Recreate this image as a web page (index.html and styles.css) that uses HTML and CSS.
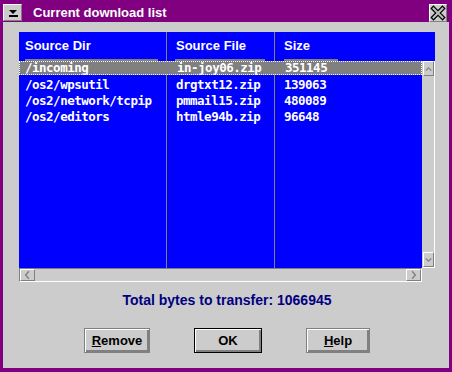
FILE: index.html
```html
<!DOCTYPE html>
<html lang="en">
<head>
  <meta charset="UTF-8" />
  <title>Current download list</title>
  <link rel="stylesheet" href="styles.css">
</head>
<body>

  <div class="window">
    <div class="titlebar">
      <div class="sysmenu">
        <svg width="17" height="15" viewBox="0 0 17 15"><polygon points="5,5 13,5 9,9" fill="#000"/><rect x="5" y="10" width="9" height="2" fill="#000"/></svg>
      </div>
      <div class="title">Current download list</div>
      <div class="close">
        <svg width="16" height="16" viewBox="0 0 16 16">
          <path d="M3.5 3.5 L12.5 12.5 M12.5 3.5 L3.5 12.5" stroke="#000" stroke-width="4.5" stroke-linecap="square"/>
          <path d="M3.5 3.5 L12.5 12.5 M12.5 3.5 L3.5 12.5" stroke="#c0c0c0" stroke-width="2" stroke-linecap="square"/>
        </svg>
      </div>
    </div>

    <div class="client">
      <div class="listbox">
        <div class="lb-head">
          <div class="hd c1"><div class="hd-text">Source Dir</div><div class="hd-line l1"></div></div>
          <div class="hd c2"><div class="hd-text">Source File</div><div class="hd-line l2"></div></div>
          <div class="hd c3"><div class="hd-text">Size</div><div class="hd-line l3"></div></div>
        </div>

        <div class="lb-mid">
          <div class="lb-body">
            <div class="row sel"><span class="c1">/incoming</span><span class="c2">in-joy06.zip</span><span class="c3">351145</span></div>
            <div class="row"><span class="c1">/os2/wpsutil</span><span class="c2">drgtxt12.zip</span><span class="c3">139063</span></div>
            <div class="row"><span class="c1">/os2/network/tcpip</span><span class="c2">pmmail15.zip</span><span class="c3">480089</span></div>
            <div class="row"><span class="c1">/os2/editors</span><span class="c2">htmle94b.zip</span><span class="c3">96648</span></div>
          </div>
          <div class="vscroll">
            <div class="arrow v"><svg width="11" height="12" viewBox="0 0 11 12"><polyline points="2,8 5.5,4.5 9,8" fill="none" stroke="#808080" stroke-width="1.5"/></svg></div>
            <div class="arrow v"><svg width="11" height="12" viewBox="0 0 11 12"><polyline points="2,4 5.5,7.5 9,4" fill="none" stroke="#808080" stroke-width="1.5"/></svg></div>
          </div>
        </div>

        <div class="hscroll">
          <div class="arrow h"><svg width="14" height="12" viewBox="0 0 14 12"><polyline points="8.5,2 5,6 8.5,10" fill="none" stroke="#808080" stroke-width="1.5"/></svg></div>
          <div class="arrow h"><svg width="14" height="12" viewBox="0 0 14 12"><polyline points="5.5,2 9,6 5.5,10" fill="none" stroke="#808080" stroke-width="1.5"/></svg></div>
        </div>
      </div>

      <div class="total">Total bytes to transfer: 1066945</div>

      <div class="buttons">
        <button class="btn b-remove"><u>R</u>emove</button>
        <button class="btn b-ok default">OK</button>
        <button class="btn b-help"><u>H</u>elp</button>
      </div>
    </div>
  </div>

</body>
</html>
```

FILE: styles.css
```css
:root {
  --purple: #800080;
  --face: #cccccc;
  --shadow: #808080;
  --blue: #0000ff;
  --navy: #000080;
}

body {
  margin: 0;
  font-family: 'Liberation Sans', Arial, sans-serif;
  font-weight: bold;
  font-size: 13px;
  line-height: 15px;
}

.window {
  width: 452px;
  height: 372px;
  box-sizing: border-box;
  background: var(--face);
  border-left: 3px solid var(--purple);
  border-right: 3px solid var(--purple);
  border-bottom: 4px solid var(--purple);
  display: flex;
  flex-direction: column;
}

/* title bar */
.titlebar {
  height: 22px;
  background: var(--purple);
  display: flex;
  align-items: flex-start;
}

.sysmenu, .close {
  box-sizing: border-box;
  background: var(--face);
  border-top: 1px solid #fff;
  border-left: 1px solid #fff;
  border-right: 1px solid var(--shadow);
  border-bottom: 1px solid var(--shadow);
  display: flex;
  align-items: center;
  justify-content: center;
}

.sysmenu {
  width: 19px;
  height: 17px;
  margin-top: 4px;
}

.close {
  width: 18px;
  height: 18px;
  margin-top: 4px;
  margin-left: auto;
  margin-right: 2px;
}

.title {
  color: #fff;
  margin: 5px 0 0 11px;
}

/* client area */
.client {
  flex: 1;
  display: flex;
  flex-direction: column;
  padding: 10px 14px 0 16px;
}

.listbox {
  width: 416px;
}

.lb-head {
  height: 29px;
  background:
    linear-gradient(var(--shadow), var(--shadow)) 147px 0 / 1px 100% no-repeat,
    linear-gradient(var(--shadow), var(--shadow)) 255px 0 / 1px 100% no-repeat,
    var(--blue);
  display: grid;
  grid-template-columns: 147px 108px 1fr;
  color: #fff;
}

.hd {
  padding-top: 6px;
}

.hd-text {
  height: 15px;
}

.hd.c1 .hd-text { padding-left: 6px; }
.hd.c2 .hd-text { padding-left: 10px; }
.hd.c3 .hd-text { padding-left: 10px; }

.hd-line {
  height: 2px;
  margin-top: 6px;
  background: var(--shadow);
}

.l1 { margin-left: 6px; width: 133px; }
.l2 { margin-left: 9px; width: 90px; }
.l3 { margin-left: 10px; width: 54px; }

.lb-mid {
  display: flex;
}

.lb-body {
  width: 403px;
  height: 207px;
  background:
    linear-gradient(var(--shadow), var(--shadow)) 147px 0 / 1px 100% no-repeat,
    linear-gradient(var(--shadow), var(--shadow)) 255px 0 / 1px 100% no-repeat,
    var(--blue);
  font-family: 'DejaVu Sans Mono', monospace;
  font-size: 12.5px;
  letter-spacing: -0.5px;
  color: #fff;
}

.row {
  display: grid;
  grid-template-columns: 147px 108px 1fr;
  height: 16px;
  line-height: 14px;
  box-sizing: border-box;
  padding-top: 1px;
}

.row .c1 { padding-left: 6px; }
.row .c2 { padding-left: 10px; }
.row .c3 { padding-left: 10px; }

.row.sel {
  height: 14px;
  padding-top: 0;
  margin-bottom: 2px;
  line-height: 12px;
  background: var(--shadow);
  border: 1px dotted #fff;
}

.row.sel .c1 { padding-left: 5px; }

.vscroll {
  width: 13px;
  height: 207px;
  box-sizing: border-box;
  border-right: 1px solid #fff;
  border-bottom: 1px solid #fff;
  display: flex;
  flex-direction: column;
  justify-content: space-between;
}

.arrow {
  box-sizing: border-box;
  background: var(--face);
  border-top: 1px solid #fff;
  border-left: 1px solid #fff;
  border-right: 1px solid var(--shadow);
  border-bottom: 1px solid var(--shadow);
  display: flex;
  align-items: center;
  justify-content: center;
}

.arrow.v {
  width: 11px;
  height: 15px;
  margin-left: 1px;
}

.hscroll {
  width: 403px;
  height: 14px;
  box-sizing: border-box;
  border-top: 1px solid var(--shadow);
  border-left: 1px solid var(--shadow);
  border-right: 1px solid #fff;
  border-bottom: 1px solid #fff;
  display: flex;
  justify-content: space-between;
}

.arrow.h {
  width: 15px;
  height: 12px;
}

.total {
  margin-top: 10px;
  font-size: 14px;
  line-height: 16px;
  text-align: center;
  color: var(--navy);
}

.buttons {
  margin-top: 20px;
  display: flex;
  justify-content: center;
  gap: 44px;
}

.btn {
  font: inherit;
  color: #000;
  height: 25px;
  padding: 4px 0 5px;
  background: var(--face);
  border: 1px solid var(--shadow);
  box-shadow: inset 1px 1px #fff, inset -2px -2px var(--shadow);
  box-sizing: border-box;
}

.btn.default {
  border-color: #000;
}

.b-remove { width: 66px; }
.b-ok { width: 68px; }
.b-help { width: 64px; }
```
